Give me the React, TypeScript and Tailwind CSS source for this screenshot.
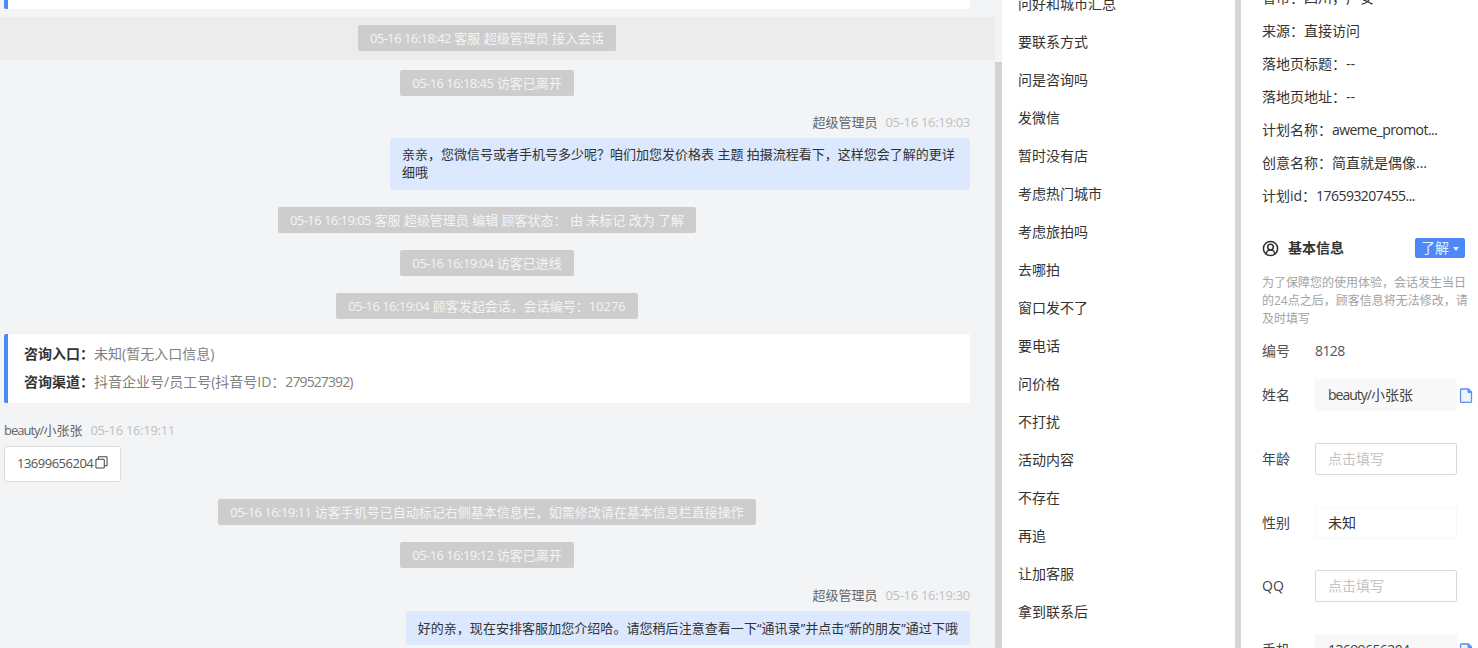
import type { ReactNode } from "react";
import { CircleUserRound } from "lucide-react";

const quickReplies = [
  "问好和城市汇总",
  "要联系方式",
  "问是咨询吗",
  "发微信",
  "暂时没有店",
  "考虑热门城市",
  "考虑旅拍吗",
  "去哪拍",
  "窗口发不了",
  "要电话",
  "问价格",
  "不打扰",
  "活动内容",
  "不存在",
  "再追",
  "让加客服",
  "拿到联系后",
];

const SystemPill = ({ time, text, className = "" }: { time: string; text: string; className?: string }) => (
  <div className={`flex justify-center ${className}`}>
    <div className="h-[26px] rounded-[2px] bg-[#cdcdcd] px-3 text-[13px] leading-[26px] whitespace-nowrap text-[#f4f4f4]">
      <span className="tracking-[-0.55px]">{time}</span> {text}
    </div>
  </div>
);

const AgentHead = ({ time, className = "" }: { time: string; className?: string }) => (
  <div className={`flex h-5 justify-end gap-2 text-[13px] leading-5 ${className}`}>
    <span className="text-[#666666]">超级管理员</span>
    <span className="tracking-[-0.3px] text-[#c0c0c0]">{time}</span>
  </div>
);

const DocIcon = () => (
  <svg width="14" height="15" viewBox="0 0 14 15" className="shrink-0">
    <path d="M1.5 1h8l3 3v9.5a.8.8 0 0 1-.8.8H2.3a.8.8 0 0 1-.8-.8V1.8a.8.8 0 0 1 .8-.8z" fill="#eef4fe" stroke="#5b8ff0" strokeWidth="1.3" />
    <path d="M9 1.2v3.3h3.4" fill="#5b8ff0" stroke="#5b8ff0" strokeWidth="1" />
  </svg>
);

const CopySmall = () => (
  <svg width="13" height="13" viewBox="0 0 14 14" fill="none" stroke="#444444" strokeWidth="1.1" className="mb-[3px] ml-[2px]">
    <rect x="1" y="3.5" width="9" height="9.5" rx="1" />
    <path d="M3.5 3.5V1.5a.6.6 0 0 1 .6-.6h8.3a.6.6 0 0 1 .6.6v8.4a.6.6 0 0 1-.6.6H10" />
  </svg>
);

const FormRow = ({
  label,
  children,
  variant,
  copy,
}: {
  label: string;
  children: ReactNode;
  variant: "fill" | "border" | "faint";
  copy?: boolean;
}) => {
  const box =
    variant === "fill"
      ? "border-[#f8f8f8] bg-[#f8f8f8] text-[#444444]"
      : variant === "faint"
        ? "border-[#f7f7f7] bg-white text-[#333333]"
        : "border-[#d9d9d9] bg-white text-[#c4c4c4]";
  return (
    <div className="flex h-8 items-center">
      <span className="w-[53px] shrink-0 text-sm text-[#444444]">{label}</span>
      <div className={`h-8 w-[142px] shrink-0 rounded-[2px] border px-3 text-sm leading-[30px] whitespace-nowrap ${box}`}>
        {children}
      </div>
      {copy && (
        <span className="ml-[2px]">
          <DocIcon />
        </span>
      )}
    </div>
  );
};

const App = () => {
  const visitInfo: ReactNode[] = [
    "省市：四川，广安",
    "来源：直接访问",
    "落地页标题：--",
    "落地页地址：--",
    <>
      计划名称：<span className="tracking-[-0.55px]">aweme_promot...</span>
    </>,
    "创意名称：简直就是偶像...",
    <>
      计划id：<span className="tracking-[-0.55px]">176593207455...</span>
    </>,
  ];

  return (
    <div
      className="flex h-[648px] w-[1478px] overflow-hidden bg-white text-[#333333]"
      style={{ fontFamily: '"Open Sans", "Noto Sans CJK SC", sans-serif' }}
    >
      {/* CHAT */}
      <div className="flex w-[1002px] shrink-0 bg-[#f3f4f6]">
        <div className="w-[995px] shrink-0">
          <div className="ml-1 mr-[25px] h-[9px] rounded-b-[2px] border-l-4 border-[#4d88f7] bg-white"></div>

          <div className="mt-2 bg-[#ececed] pt-2 pr-[25px] pb-[9px] pl-1">
            <SystemPill time="05-16 16:18:42" text="客服 超级管理员 接入会话" />
          </div>

          <div className="pr-[25px] pl-1">
            <SystemPill time="05-16 16:18:45" text="访客已离开" className="mt-[10px]" />

            <AgentHead time="05-16 16:19:03" className="mt-4" />
            <div className="mt-[6px] flex justify-end">
              <div className="w-[580px] rounded-[3px] bg-[#dbe8fd] px-3 pt-[7px] pb-[9px] text-[13px] leading-[18px] text-[#333333]">
                亲亲，您微信号或者手机号多少呢？咱们加您发价格表 主题 拍摄流程看下，这样您会了解的更详细哦
              </div>
            </div>

            <SystemPill time="05-16 16:19:05" text="客服 超级管理员 编辑 顾客状态： 由 未标记 改为 了解" className="mt-[17px]" />
            <SystemPill time="05-16 16:19:04" text="访客已进线" className="mt-[17px]" />
            <SystemPill time="05-16 16:19:04" text="顾客发起会话，会话编号：10276" className="mt-[17px]" />

            {/* ENTRY CARD */}
            <div className="mt-[15px] h-[69px] rounded-[2px] border-l-4 border-[#4d88f7] bg-white pt-[6px] pl-4 text-sm leading-[28px]">
              <div>
                <span className="font-bold text-[#333333]">咨询入口：</span>
                <span className="text-[#808080]">未知(暂无入口信息)</span>
              </div>
              <div>
                <span className="font-bold text-[#333333]">咨询渠道：</span>
                <span className="text-[#808080]">
                  抖音企业号/员工号(抖音号ID：<span className="tracking-[-0.9px]">279527392)</span>
                </span>
              </div>
            </div>

            <div className="mt-[17px] flex h-5 gap-2 text-[13px] leading-5">
              <span className="text-[#666666]">
                <span className="tracking-[-1px]">beauty/</span>小张张
              </span>
              <span className="tracking-[-0.3px] text-[#c0c0c0]">05-16 16:19:11</span>
            </div>
            <div className="mt-[6px] flex h-9 w-[117px] items-center rounded-[3px] border border-[#dcdcdc] bg-white pl-3 text-[13px] tracking-[-0.5px] text-[#555555]">
              13699656204
              <CopySmall />
            </div>

            <SystemPill time="05-16 16:19:11" text="访客手机号已自动标记右侧基本信息栏，如需修改请在基本信息栏直接操作" className="mt-[17px]" />
            <SystemPill time="05-16 16:19:12" text="访客已离开" className="mt-[17px]" />

            <AgentHead time="05-16 16:19:30" className="mt-[17px]" />
            <div className="mt-[6px] flex justify-end">
              <div className="rounded-[3px] bg-[#dbe8fd] px-3 py-2 text-[13px] leading-[18px] tracking-[0.05px] text-[#333333]">
                好的亲，现在安排客服加您介绍哈。请您稍后注意查看一下“通讯录”并点击“新的朋友”通过下哦
              </div>
            </div>
          </div>
        </div>
        {/* scrollbar */}
        <div className="w-[7px] shrink-0 pt-[62px]">
          <div className="h-full bg-[#d2d2d2]"></div>
        </div>
      </div>

      {/* QUICK REPLIES */}
      <div className="w-[233px] shrink-0 bg-white pl-4">
        <div className="-mt-[15px]">
          {quickReplies.map((item) => (
            <div key={item} className="h-[38px] text-sm leading-[38px] text-[#333333]">
              {item}
            </div>
          ))}
        </div>
      </div>

      <div className="w-[6px] shrink-0 bg-[#d5d5d5]"></div>

      {/* CUSTOMER PANEL */}
      <div className="flex-1 bg-white pl-[21px]">
        <div className="-mt-[19px]">
          {visitInfo.map((item, i) => (
            <div key={i} className="h-[33px] text-sm leading-[33px] whitespace-nowrap text-[#333333]">
              {item}
            </div>
          ))}
        </div>

        <div className="mt-[26px] flex h-5 items-center">
          <CircleUserRound size={17} strokeWidth={2.2} className="text-[#333333]" />
          <span className="ml-[9px] text-sm font-bold text-[#333333]">基本信息</span>
          <span className="ml-[71px] flex h-5 w-[50px] items-center justify-center gap-1 rounded-[2px] bg-[#4d88f7] text-sm text-[#e8f0ff]">
            了解
            <span className="mt-[2px] border-x-[3px] border-t-[4px] border-x-transparent border-t-[#e8f0ff]"></span>
          </span>
        </div>

        <p className="mt-4 w-[206px] text-xs leading-[18px] text-[#a3a3a3]">
          为了保障您的使用体验，会话发生当日的24点之后，顾客信息将无法修改，请及时填写
        </p>

        <div className="mt-[13px] flex h-5 items-center text-sm text-[#555555]">
          <span className="w-[53px]">编号</span>
          <span className="tracking-[-0.6px]">8128</span>
        </div>

        <div className="mt-[18px] flex flex-col gap-[31.75px]">
          <FormRow label="姓名" variant="fill" copy>
            <span className="tracking-[-1px]">beauty/</span>小张张
          </FormRow>
          <FormRow label="年龄" variant="border">
            点击填写
          </FormRow>
          <FormRow label="性别" variant="faint">
            未知
          </FormRow>
          <FormRow label="QQ" variant="border">
            点击填写
          </FormRow>
          <FormRow label="手机" variant="fill" copy>
            <span className="tracking-[-0.6px]">13699656204</span>
          </FormRow>
        </div>
      </div>
    </div>
  );
};

export default App;
